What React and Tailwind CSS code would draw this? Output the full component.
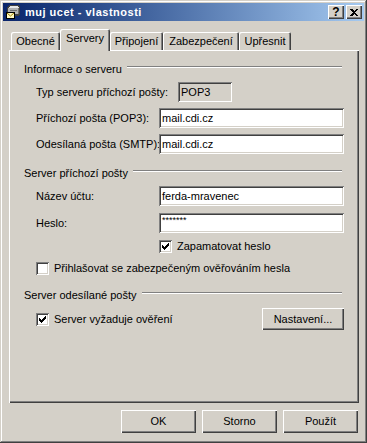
import React from 'react';

const sunken = 'shadow-[inset_1px_1px_0_#808080,inset_-1px_-1px_0_#fff,inset_2px_2px_0_#404040,inset_-2px_-2px_0_#d4d0c8]';
const raised = 'shadow-[inset_1px_1px_0_#fff,inset_-1px_-1px_0_#404040,inset_-2px_-2px_0_#808080]';

function Check() {
  return (
    <svg width="7" height="7" viewBox="0 0 7 7" shapeRendering="crispEdges">
      <path d="M6 0h1v1h-1zM5 1h2v1h-2zM0 2h1v1h-1zM4 2h3v1h-3zM0 3h2v1h-2zM3 3h3v1h-3zM0 4h5v1h-5zM1 5h3v1h-3zM2 6h1v1h-1z" fill="#000" />
    </svg>
  );
}

function Checkbox({ checked }) {
  return (
    <div className={`w-[13px] h-[13px] bg-white shrink-0 flex items-center justify-center ${sunken}`}>
      {checked && <Check />}
    </div>
  );
}

function Field({ value, readOnly, className = 'w-[185px]' }) {
  return (
    <div className={`h-[20px] flex items-center pl-[3px] ${readOnly ? 'bg-[#d4d0c8]' : 'bg-white'} ${sunken} ${className}`}>
      {value}
    </div>
  );
}

function Group({ title, className }) {
  return (
    <div className={`flex items-start h-[13px] pl-[15px] pr-[17px] ${className}`}>
      <span className="whitespace-nowrap">{title}</span>
      <div className="flex-1 ml-[5px] mt-[3px] h-[2px] border-t border-t-[#808080] border-b border-b-white" />
    </div>
  );
}

function Button({ children, className }) {
  return (
    <div className={`flex items-center justify-center bg-[#d4d0c8] ${raised} ${className}`}>{children}</div>
  );
}

function MailIcon() {
  return (
    <svg width="16" height="16" viewBox="0 0 16 16" shapeRendering="crispEdges">
      <path d="M4 1h9l2 2v7l-2 2H2V4z" fill="#404040" />
      <path d="M5 2h7l2 2H3z" fill="#e8e8e8" />
      <path d="M3 4h11v6H3z" fill="#b0b0b0" />
      <path d="M13 4h1v6h-1z" fill="#707070" />
      <path d="M5 6h7v1H5z" fill="#707070" />
      <path d="M1 8h9v7H1z" fill="#000" />
      <path d="M2 9h7v5H2z" fill="#fff8c0" />
      <path d="M2 9l3.5 3L9 9" stroke="#a08000" fill="none" strokeWidth="1" shapeRendering="auto" />
    </svg>
  );
}

function Tab({ label, selected, className }) {
  return (
    <div
      className={`flex items-center justify-center rounded-t-[2px] bg-[#d4d0c8] shadow-[inset_1px_1px_0_#fff,inset_-1px_0_0_#404040,inset_-2px_0_0_#808080] ${
        selected ? 'h-[22px] -mb-[1px] relative z-10 pb-[3px]' : 'h-[18px]'
      } ${className}`}
    >
      {label}
    </div>
  );
}

export default function App() {
  return (
    <div className="w-[367px] h-[443px] bg-[#d4d0c8] p-[3px] flex flex-col text-black text-[11px] leading-[13px] font-['Liberation_Sans',Arial,sans-serif] shadow-[inset_-1px_-1px_0_#404040,inset_1px_1px_0_#d4d0c8,inset_-2px_-2px_0_#808080,inset_2px_2px_0_#fff]">
      {/* title bar */}
      <div className="h-[18px] flex items-center bg-gradient-to-r from-[#0a246a] to-[#a6caf0] pl-[2px] pr-[2px]">
        <MailIcon />
        <span className="ml-[4px] text-white font-bold tracking-[0.5px] text-[11px]">muj ucet - vlastnosti</span>
        <div className="flex-1" />
        <Button className="w-[16px] h-[14px] font-bold text-[12px] leading-none">?</Button>
        <Button className="w-[16px] h-[14px] ml-[2px]">
          <svg width="8" height="7" viewBox="0 0 8 7" shapeRendering="crispEdges">
            <path d="M0 0h2l2 2 2-2h2L5 3.5 8 7H6L4 5 2 7H0l3-3.5z" fill="#000" />
          </svg>
        </Button>
      </div>

      {/* tabs */}
      <div className="flex items-end h-[21px] mt-[8px] ml-[8px]">
        <Tab label="Obecné" className="w-[49px]" />
        <Tab label="Servery" selected className="w-[50px]" />
        <Tab label="Připojení" className="w-[53px]" />
        <Tab label="Zabezpečení" className="w-[76px]" />
        <Tab label="Upřesnit" className="w-[52px]" />
      </div>

      {/* panel */}
      <div className="ml-[6px] w-[350px] h-[353px] flex flex-col shadow-[inset_1px_1px_0_#fff,inset_-1px_-1px_0_#404040,inset_-2px_-2px_0_#808080]">
        <Group title="Informace o serveru" className="mt-[13px]" />
        <div className="flex items-center h-[20px] mt-[6px] pl-[27px]">
          <span className="w-[142px]">Typ serveru příchozí pošty:</span>
          <Field value="POP3" readOnly className="w-[54px]" />
        </div>
        <div className="flex items-center h-[20px] mt-[6px] pl-[27px]">
          <span className="w-[123px]">Příchozí pošta (POP3):</span>
          <Field value="mail.cdi.cz" />
        </div>
        <div className="flex items-center h-[20px] mt-[6px] pl-[27px]">
          <span className="w-[123px] whitespace-nowrap">Odesílaná pošta (SMTP):</span>
          <Field value="mail.cdi.cz" />
        </div>

        <Group title="Server příchozí pošty" className="mt-[13px]" />
        <div className="flex items-center h-[20px] mt-[6px] pl-[27px]">
          <span className="w-[123px]">Název účtu:</span>
          <Field value="ferda-mravenec" />
        </div>
        <div className="flex items-center h-[20px] mt-[7px] pl-[27px]">
          <span className="w-[123px]">Heslo:</span>
          <Field value={<span className="text-[9px] -mt-[6px]">*******</span>} />
        </div>
        <div className="flex items-center h-[13px] mt-[7px] pl-[150px] gap-[5px]">
          <Checkbox checked />
          <span>Zapamatovat heslo</span>
        </div>
        <div className="flex items-center h-[13px] mt-[9px] pl-[27px] gap-[5px]">
          <Checkbox />
          <span>Přihlašovat se zabezpečeným ověřováním hesla</span>
        </div>

        <Group title="Server odesílané pošty" className="mt-[14px]" />
        <div className="flex items-center h-[22px] mt-[6px] pl-[27px] pr-[15px]">
          <Checkbox checked />
          <span className="ml-[5px]">Server vyžaduje ověření</span>
          <div className="flex-1" />
          <Button className="w-[82px] h-[22px]">Nastavení...</Button>
        </div>
      </div>

      {/* dialog buttons */}
      <div className="flex justify-end gap-[6px] mt-[7px] mr-[6px]">
        <Button className="w-[75px] h-[23px]">OK</Button>
        <Button className="w-[75px] h-[23px]">Storno</Button>
        <Button className="w-[75px] h-[23px]">Použít</Button>
      </div>
    </div>
  );
}
